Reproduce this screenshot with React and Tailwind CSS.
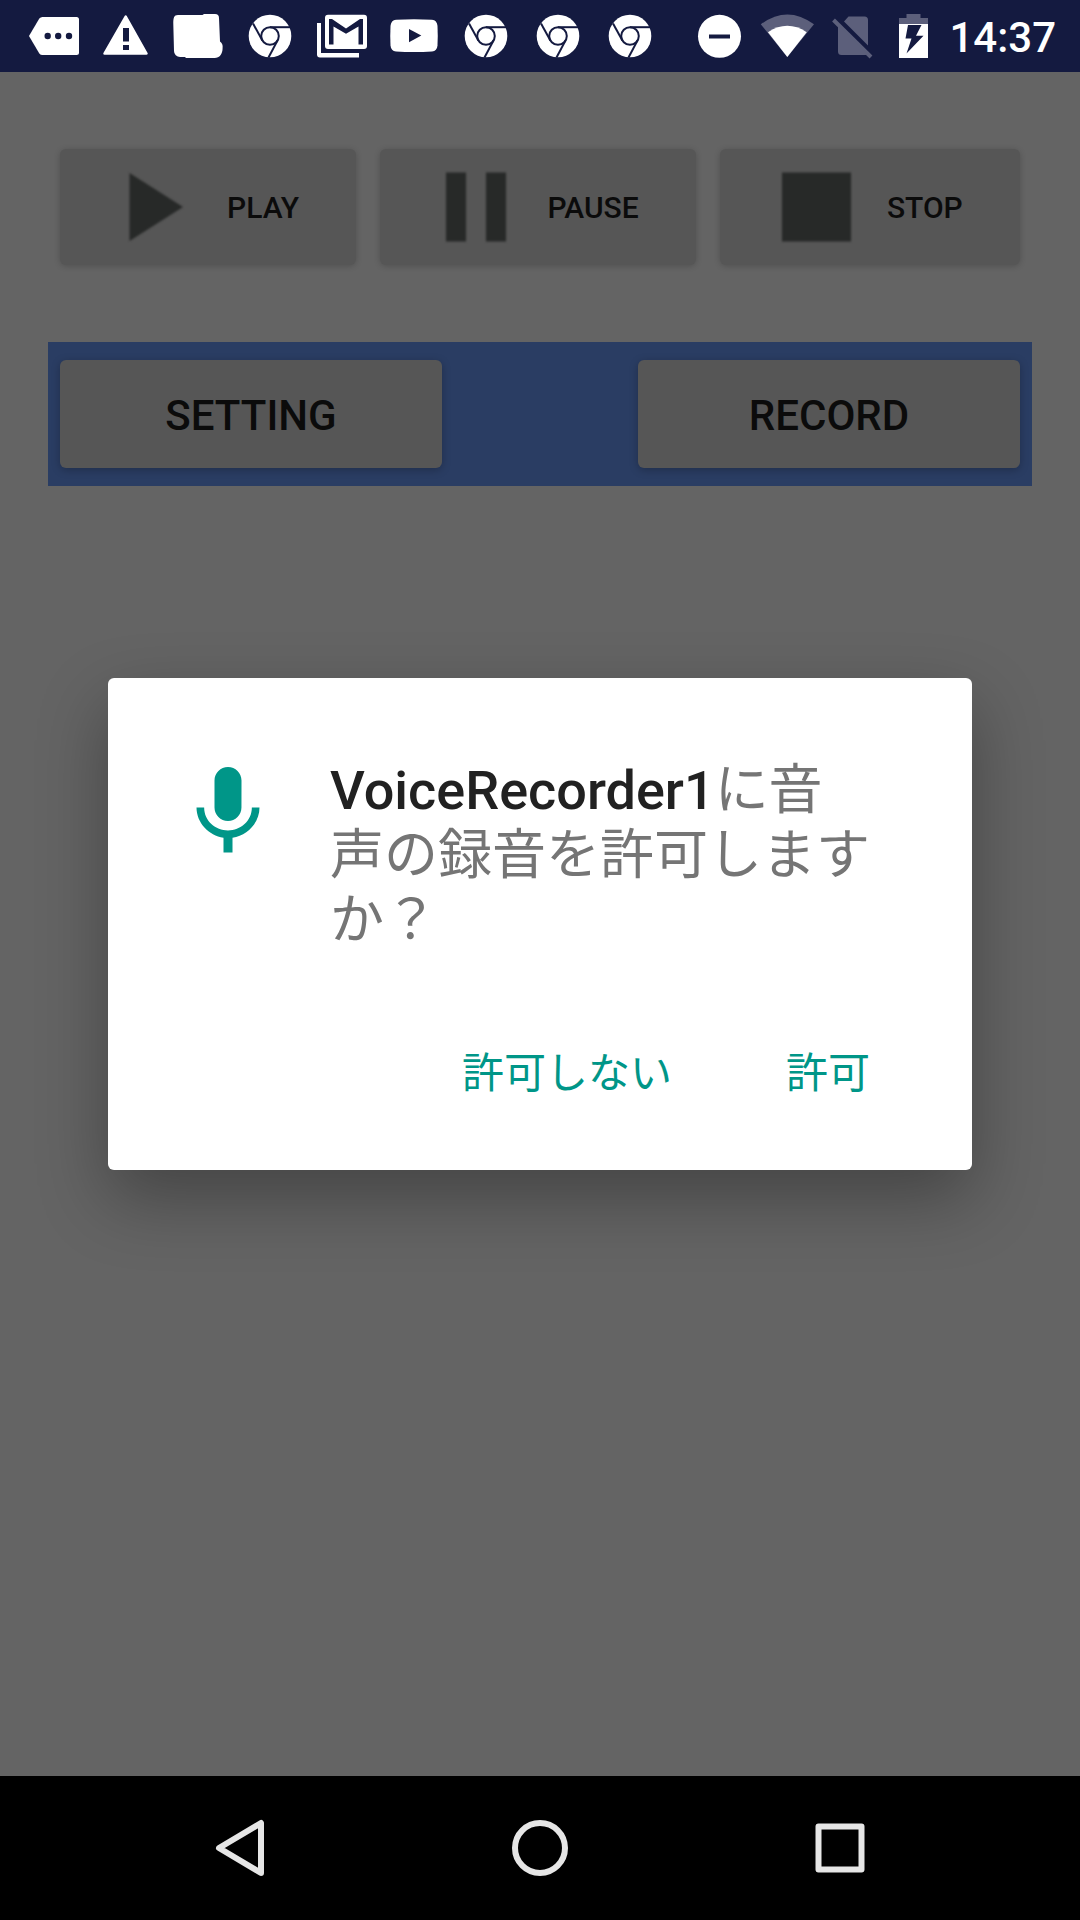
function Cell({ w = 72, children }) {
  return (
    <svg width={w} height="72" viewBox={`0 0 ${w} 72`} className="shrink-0" aria-hidden="true">
      {children}
    </svg>
  );
}

function ChromeIcon() {
  return (
    <Cell>
      <circle cx="36" cy="36" r="21.3" fill="#fff" />
      <g fill="none" stroke="#141a40" strokeWidth="2">
        <circle cx="36" cy="36" r="8.8" />
        <path d="M36 27.2H57" />
        <path d="M28.4 40.4 L19 23.5" />
        <path d="M43.6 40.4 L34.5 57.5" />
      </g>
    </Cell>
  );
}

function MoreIcon() {
  return (
    <Cell>
      <path d="M24.5 17H58.5a2.5 2.5 0 0 1 2.5 2.5V52.5a2.5 2.5 0 0 1-2.5 2.5H24.5a4 4 0 0 1-3.2-1.6L11 36 21.3 18.6A4 4 0 0 1 24.5 17z" fill="#fff" />
      <g fill="#141a40">
        <circle cx="29.7" cy="36" r="3.2" />
        <circle cx="40.2" cy="36" r="3.2" />
        <circle cx="51" cy="36" r="3.2" />
      </g>
    </Cell>
  );
}

function WarningIcon() {
  return (
    <Cell>
      <path d="M35.7 16.5 56.500 53.500H14.500z" fill="#fff" stroke="#fff" strokeWidth="2.5" strokeLinejoin="round" />
      <path d="M33 28h6v13.500h-6zM33 45h6v5h-6z" fill="#141a40" />
    </Cell>
  );
}

function BlobIcon() {
  return (
    <Cell>
      <path d="M16 15H40.500L42 14H53a4 4 0 0 1 4 4l1 23.500a7 7 0 0 1 2.600 6.500c0 6-3 10-8 10H24l-1-1h-5a6 6 0 0 1-6-6L11.300 24C11.300 18 11.800 15 16 15z" fill="#fff" />
    </Cell>
  );
}

function MailIcon() {
  return (
    <Cell>
      <path d="M11 23h4v30H53V57.500H14a3 3 0 0 1-3-3z" fill="#fff" />
      <rect x="19" y="14.700" width="42" height="34.300" rx="3" fill="#fff" />
      <path d="M23 19V44.500h4.500V26.500L40 33.800 52.500 26.500V44.500H57V19H54L40 28.500 26 19z" fill="#141a40" />
    </Cell>
  );
}

function VideoIcon() {
  return (
    <Cell>
      <path d="M18 19.800Q36 18.800 54 19.800 59 20.300 59.500 26 60 36 59.500 45.500 59 51 54 51.500 36 52.500 18 51.500 13 51 12.500 45.500 12 36 12.500 26 13 20.300 18 19.800z" fill="#fff" />
      <path d="M31 29v13.300L43.300 35.600z" fill="#141a40" />
    </Cell>
  );
}

function StatusBar() {
  return (
    <header className="flex h-[72px] items-center bg-[#141a40] pl-[18px] pr-6">
      <MoreIcon />
      <WarningIcon />
      <BlobIcon />
      <ChromeIcon />
      <MailIcon />
      <VideoIcon />
      <ChromeIcon />
      <ChromeIcon />
      <ChromeIcon />
      <div className="ml-auto flex items-center">
        <Cell w={66}>
          <circle cx="32.500" cy="36.300" r="21.500" fill="#fff" />
          <path d="M22 34.500h21v4H22z" fill="#141a40" />
        </Cell>
        <Cell w={66}>
          <path d="M34.300 57 7.800 24.300Q34.300 4.500 61 24.300z" fill="#5c5f7b" />
          <path d="M34.300 57 15 32.200Q34.300 19.500 53.700 32.200z" fill="#fff" />
        </Cell>
        <Cell w={66}>
          <path d="M29.500 16.500H45.500a3.500 3.500 0 0 1 3.500 3.500V45.500L25 21.500z" fill="#5c5f7b" />
          <path d="M14.500 20 52 57" stroke="#5c5f7b" strokeWidth="4" />
          <path d="M19 24.500 49 54.500 46.500 55H22.500a3.500 3.500 0 0 1-3.500-3.500z" fill="#5c5f7b" />
        </Cell>
        <Cell w={60}>
          <path d="M21.500 14H35.500V18H43V24H14V18H21.500z" fill="#5c5f7b" />
          <path d="M14 24H43V58H14z" fill="#fff" />
          <path d="M23 25H36.500L31 35.800H38.500L21.500 53.500 26.500 38.500H20.500z" fill="#141a40" />
        </Cell>
        <time className="ml-1 pt-1 text-[42px] leading-[68px] font-medium text-white">14:37</time>
      </div>
    </header>
  );
}

function MediaButton({ label, children }) {
  return (
    <button
      type="button"
      className="flex h-[116px] flex-auto items-center gap-3 rounded-md bg-[#565656] px-14 text-[30px] font-medium text-[#0b0b0b] shadow-[0_1px_6px_rgba(0,0,0,0.2)]"
    >
      <svg width="99" height="72" viewBox="0 0 99 72" fill="#272928" className="shrink-0 blur-[1px]" aria-hidden="true">
        {children}
      </svg>
      {label}
    </button>
  );
}

function WideButton({ label }) {
  return (
    <button
      type="button"
      className="h-[108px] w-[382px] rounded-md bg-[#565656] pt-0.5 text-[42px] font-medium text-[#0b0b0b] shadow-[0_2px_8px_rgba(0,0,0,0.25)]"
    >
      {label}
    </button>
  );
}

function PermissionDialog() {
  return (
    <div
      role="dialog"
      aria-labelledby="permission-message"
      className="w-4/5 rounded-md bg-white pt-20 pr-[102px] pb-[60px] pl-[66px] shadow-[0_28px_70px_rgba(0,0,0,0.32)]"
    >
      <div className="flex gap-12">
        <svg width="108" height="108" viewBox="0 0 24 24" fill="#009688" className="shrink-0" aria-hidden="true">
          <path d="M12 14c1.660 0 2.990-1.340 2.990-3L15 5c0-1.660-1.340-3-3-3S9 3.340 9 5v6c0 1.660 1.340 3 3 3zm5.300-3c0 3-2.540 5.100-5.300 5.100S6.700 14 6.700 11H5c0 3.410 2.720 6.230 6 6.720V21h2v-3.280c3.280-.480 6-3.300 6-6.720h-1.700z" />
        </svg>
        <p id="permission-message" className="text-[54px] leading-[65px] text-[#757575]">
          <span className="font-medium text-[#212121]">VoiceRecorder1</span>に音声の録音を許可しますか？
        </p>
      </div>
      <div className="mt-[85px] flex justify-end gap-[114px] text-[42px] leading-[72px] text-[#009688]">
        <button type="button">許可しない</button>
        <button type="button">許可</button>
      </div>
    </div>
  );
}

export default function App() {
  return (
    <div className="flex min-h-screen flex-col font-['Roboto','Noto_Sans_CJK_JP',sans-serif]">
      <StatusBar />
      <div className="relative flex grow flex-col bg-[#646464]">
        <main className="px-12 pt-[77px]">
          <div className="flex gap-6 px-3">
            <MediaButton label="PLAY">
              <path d="M13.500 2 67 36 13.500 70z" />
            </MediaButton>
            <MediaButton label="PAUSE">
              <path d="M10 1.500h20v69H10zM50 1.500h20v69H50z" />
            </MediaButton>
            <MediaButton label="STOP">
              <path d="M6 1.500h69v69H6z" />
            </MediaButton>
          </div>
          <div className="mt-[77px] flex h-36 items-center justify-between bg-[#2a3d63] px-3">
            <WideButton label="SETTING" />
            <WideButton label="RECORD" />
          </div>
        </main>
        <div className="absolute inset-0 flex items-center justify-center">
          <PermissionDialog />
        </div>
      </div>
      <nav className="flex h-36 items-center justify-center gap-[156px] bg-black">
        <button type="button" aria-label="Back" className="size-36">
          <svg width="144" height="144" viewBox="0 0 144 144" fill="none" stroke="#e6e6e6" strokeWidth="6" strokeLinejoin="round" aria-hidden="true">
            <path d="M93 47v50L51 72z" />
          </svg>
        </button>
        <button type="button" aria-label="Home" className="size-36">
          <svg width="144" height="144" viewBox="0 0 144 144" fill="none" stroke="#e6e6e6" strokeWidth="6" aria-hidden="true">
            <circle cx="72" cy="72" r="25" />
          </svg>
        </button>
        <button type="button" aria-label="Overview" className="size-36">
          <svg width="144" height="144" viewBox="0 0 144 144" fill="none" stroke="#e6e6e6" strokeWidth="6" strokeLinejoin="round" aria-hidden="true">
            <path d="M50.500 50.500h43v43h-43z" />
          </svg>
        </button>
      </nav>
    </div>
  );
}
